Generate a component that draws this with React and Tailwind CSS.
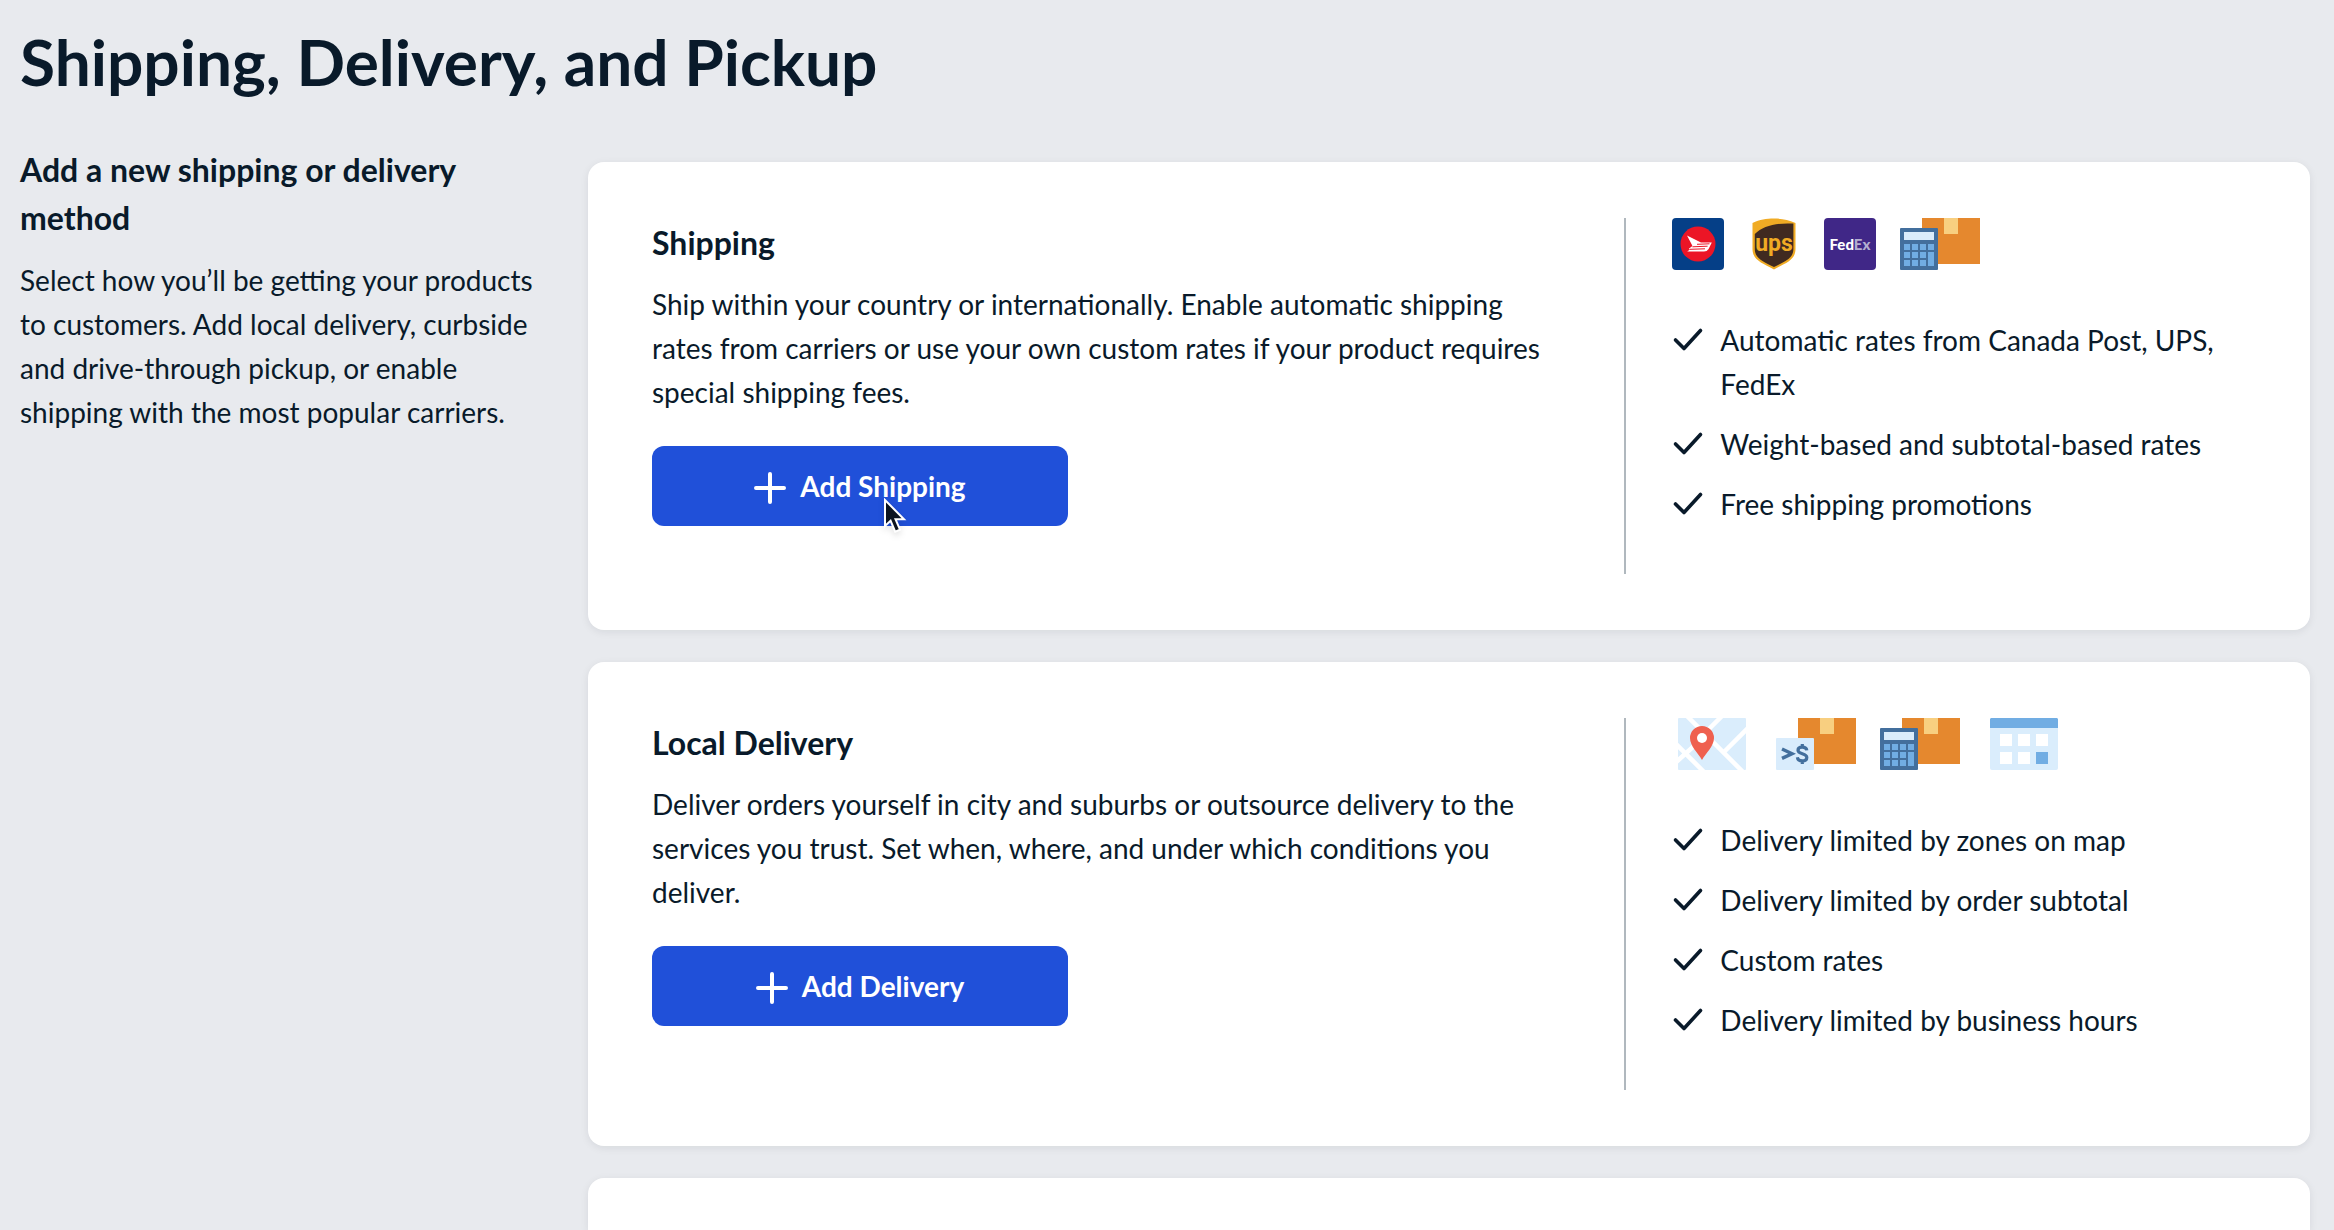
function CanadaPostIcon() {
  return (
    <svg width="52" height="52" viewBox="0 0 52 52" role="img" aria-label="Canada Post">
      <rect width="52" height="52" rx="4" fill="#053f87" />
      <circle cx="26" cy="26" r="17.5" fill="#ec1526" />
      <path d="M15 17.4L29 24.6L39.8 24.6L36.6 31Q35 33.6 32 33.6H15.2L18 31.4L16.8 30.8L20.4 28L19.6 26.2Z" fill="#fff" />
      <path
        d="M25 26.3L37.5 25.8M20.4 28.8L35.6 28.2M18 31.3L33 30.8"
        stroke="#ec1526"
        strokeWidth="1"
        fill="none"
      />
    </svg>
  );
}

function UpsIcon() {
  return (
    <svg width="52" height="52" viewBox="0 0 52 52" role="img" aria-label="UPS">
      <path
        d="M4.5 5C12 1.6 18 0.6 26 0.6S40 1.6 47.5 5V31C47.5 42 38 45 26 51.4C14 45 4.5 42 4.5 31Z"
        fill="#f0ab24"
      />
      <path
        d="M6.8 16C15 8 28 4.6 45.4 5.6V31C45.4 40.5 37 43.4 26 49C15 43.4 6.8 40.5 6.8 31Z"
        fill="#402a20"
      />
      <text
        x="26"
        y="33"
        textAnchor="middle"
        fontSize="23"
        fontWeight="700"
        fontFamily="Roboto, sans-serif"
        fill="#f0ab24"
      >
        ups
      </text>
    </svg>
  );
}

function FedExIcon() {
  return (
    <svg width="52" height="52" viewBox="0 0 52 52" role="img" aria-label="FedEx">
      <rect width="52" height="52" rx="4" fill="#402787" />
      <text
        x="26"
        y="31.5"
        textAnchor="middle"
        fontSize="15"
        fontWeight="900"
        fontFamily="Lato, sans-serif"
        fill="#fff"
      >
        Fed<tspan fill="#b3aed0">Ex</tspan>
      </text>
    </svg>
  );
}

function Box() {
  return (
    <>
      <path d="M22 0H80V46H22Z" fill="#e5882e" />
      <path d="M44 0H58V16H44Z" fill="#f8cf80" />
    </>
  );
}

function CalculatorBoxIcon() {
  return (
    <svg width="80" height="52" viewBox="0 0 80 52" aria-hidden="true">
      <Box />
      <rect y="10" width="38" height="42" rx="1" fill="#436f9d" />
      <path d="M4 14H34V22H4Z" fill="#daecfb" />
      <path
        d="M4 26h6v6H4zM12 26h6v6h-6zM20 26h6v6h-6zM28 26h6v6h-6zM4 34h6v6H4zM12 34h6v6h-6zM20 34h6v6h-6zM28 34h6v14h-6zM4 42h6v6H4zM12 42h6v6h-6zM20 42h6v6h-6z"
        fill="#71ade3"
      />
    </svg>
  );
}

function SubtotalBoxIcon() {
  return (
    <svg width="80" height="52" viewBox="0 0 80 52" aria-hidden="true">
      <Box />
      <rect y="20" width="38" height="32" rx="1" fill="#d9ecfc" />
      <path d="M6 31L16 35.7L6 40.4" fill="none" stroke="#436f9d" strokeWidth="3.4" />
      <path
        d="M30.8 32.4C30.5 30 28.8 29.2 26.3 29.2C23.5 29.2 22 30.4 22 32.2C22 36.6 30.8 34.8 30.8 39.4C30.8 41.6 29 42.8 26.3 42.8C23.5 42.8 21.7 41.8 21.4 39.2M26.3 26V29M26.3 43V46"
        fill="none"
        stroke="#436f9d"
        strokeWidth="3.2"
      />
    </svg>
  );
}

function MapIcon() {
  return (
    <svg width="80" height="52" viewBox="0 0 80 52" aria-hidden="true">
      <rect x="6" width="68" height="52" rx="1" fill="#daedfc" />
      <svg x="6" width="68" height="52" viewBox="0 0 68 52">
        <path
          d="M7 -4L68 57M46 -4L24 18M72 8L46 34M-4 24L28 56M-4 46L16 28"
          fill="none"
          stroke="#fff"
          strokeWidth="4.5"
        />
      </svg>
      <path d="M30 42C26 35 18 28 18 20A12 12 0 0 1 42 20C42 28 34 35 30 42Z" fill="#ef604f" />
      <circle cx="30" cy="20" r="5" fill="#fff" />
    </svg>
  );
}

function CalendarIcon() {
  return (
    <svg width="80" height="52" viewBox="0 0 80 52" aria-hidden="true">
      <rect x="6" width="68" height="52" rx="2" fill="#daedfc" />
      <path d="M7 0H73L74 1V10H6V1Z" fill="#71ade3" />
      <path d="M16 16h12v12H16zM34 16h12v12H34zM52 16h12v12H52zM16 34h12v12H16zM34 34h12v12H34z" fill="#fff" />
      <path d="M52 34h12v12H52z" fill="#71ade3" />
    </svg>
  );
}

function CheckIcon() {
  return (
    <svg width="32" height="44" viewBox="0 0 32 44" className="shrink-0" aria-hidden="true">
      <path
        d="M3.5 22L12 30.5L28.5 12.5"
        fill="none"
        stroke="#091a2a"
        strokeWidth="3.6"
        strokeLinecap="round"
        strokeLinejoin="round"
      />
    </svg>
  );
}

function PlusIcon() {
  return (
    <svg width="32" height="36" viewBox="0 0 32 36" aria-hidden="true">
      <path d="M16 6V34M2 20H30" stroke="#fff" strokeWidth="4" strokeLinecap="round" />
    </svg>
  );
}

function Pointer() {
  return (
    <svg
      width="28"
      height="40"
      viewBox="0 0 28 40"
      className="absolute left-[231px] top-[52px] drop-shadow-md pointer-events-none"
      aria-hidden="true"
    >
      <path
        d="M2 2V28L7.6 22.8L12.2 33.6L17 31.6L12.5 21.2H21Z"
        fill="#0b1420"
        stroke="#fff"
        strokeWidth="2"
      />
    </svg>
  );
}

function MethodCard({ title, description, action, icons, features, hovered }) {
  return (
    <section className="grid grid-cols-[61fr_39fr] px-16 py-14 bg-white rounded-2xl shadow-[0_2px_8px_rgba(9,26,42,0.08)]">
      <div className="pr-16">
        <h3 className="text-[32px] leading-[50px] font-bold">{title}</h3>
        <p className="mt-3.5">{description}</p>
        <button
          type="button"
          className="relative flex items-center justify-center gap-3.5 w-[416px] h-20 mt-8 bg-[#2050d9] text-white font-bold rounded-xl cursor-pointer"
        >
          <PlusIcon />
          {action}
          {hovered && <Pointer />}
        </button>
      </div>

      <div className="pl-[46px] pb-12 border-l-2 border-[#b0b8be]">
        <div className="flex gap-6">{icons}</div>
        <ul className="flex flex-col gap-4 mt-12">
          {features.map((feature) => (
            <li key={feature} className="flex gap-4">
              <CheckIcon />
              {feature}
            </li>
          ))}
        </ul>
      </div>
    </section>
  );
}

export default function App() {
  return (
    <div className="flex flex-col min-h-screen pl-5 pr-6 pt-[22px] bg-[#e8eaee] text-[#091a2a] text-[28px] leading-11 font-['Lato',sans-serif]">
      <h1 className="text-[64px] leading-20 font-bold">Shipping, Delivery, and Pickup</h1>

      <div className="flex flex-1 gap-8 mt-11">
        <aside className="w-[536px] shrink-0">
          <h2 className="text-[32px] leading-12 font-bold">Add a new shipping or delivery method</h2>
          <p className="mt-4">
            Select how you’ll be getting your products to customers. Add local delivery, curbside and
            drive-through pickup, or enable shipping with the most popular carriers.
          </p>
        </aside>

        <main className="flex flex-col flex-1 gap-8 pt-4">
          <MethodCard
            title="Shipping"
            description="Ship within your country or internationally. Enable automatic shipping rates from carriers or use your own custom rates if your product requires special shipping fees."
            action="Add Shipping"
            hovered
            icons={
              <>
                <CanadaPostIcon />
                <UpsIcon />
                <FedExIcon />
                <CalculatorBoxIcon />
              </>
            }
            features={[
              'Automatic rates from Canada Post, UPS, FedEx',
              'Weight-based and subtotal-based rates',
              'Free shipping promotions',
            ]}
          />
          <MethodCard
            title="Local Delivery"
            description="Deliver orders yourself in city and suburbs or outsource delivery to the services you trust. Set when, where, and under which conditions you deliver."
            action="Add Delivery"
            icons={
              <>
                <MapIcon />
                <SubtotalBoxIcon />
                <CalculatorBoxIcon />
                <CalendarIcon />
              </>
            }
            features={[
              'Delivery limited by zones on map',
              'Delivery limited by order subtotal',
              'Custom rates',
              'Delivery limited by business hours',
            ]}
          />
          <section className="flex-1 bg-white rounded-t-2xl shadow-[0_2px_8px_rgba(9,26,42,0.08)]" />
        </main>
      </div>
    </div>
  );
}
